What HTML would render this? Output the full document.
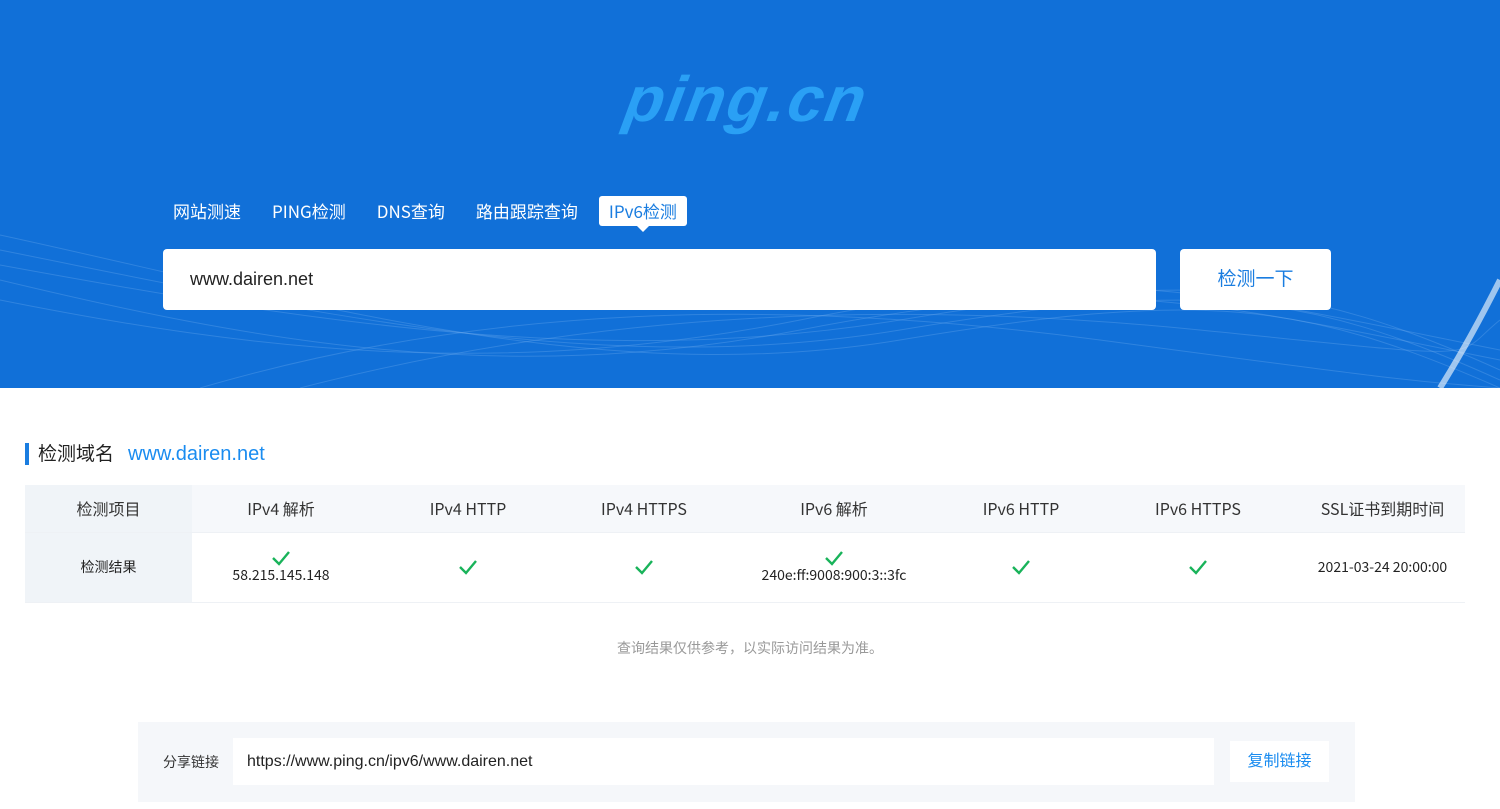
<!DOCTYPE html>
<html><head><meta charset="utf-8"><style>
*{margin:0;padding:0;box-sizing:border-box}
body{width:1500px;height:809px;overflow:hidden;background:#fff;font-family:"Liberation Sans","Noto Sans CJK SC",sans-serif;color:#333}
.hd{position:absolute;left:0;top:0;width:1500px;height:388px;background:#1170d8;overflow:hidden}
.logo{position:absolute;left:626px;top:62px;font:italic bold 64px "Liberation Sans",sans-serif;color:#2aa0f5;letter-spacing:2px;transform:skewX(-10deg)}
.tabs{position:absolute;top:196px;left:163px;display:flex;font-size:17px;color:#fff}
.tabs span{padding:4px 10px;margin-right:11px;height:30px;line-height:22px;font-family:"Noto Sans CJK SC","Liberation Sans",sans-serif}
.tabs .on{background:#fff;color:#1a7de0;border-radius:3px;position:relative}
.tabs .on:after{content:"";position:absolute;left:38px;bottom:-6px;border:6px solid transparent;border-bottom:0;border-top-color:#fff}
.inp{position:absolute;left:163px;top:249px;width:993px;height:61px;background:#fff;border-radius:4px;font-size:18px;line-height:61px;padding-left:27px;color:#222}
.btn{position:absolute;left:1180px;top:249px;width:151px;height:61px;background:#fff;border-radius:4px;font-size:19px;line-height:61px;text-align:center;color:#1a7de0}
.tt{position:absolute;left:25px;top:443px;font-size:19px;color:#222;border-left:4px solid #1a7de0;padding-left:9px;height:22px;line-height:22px;white-space:nowrap}
.tt b{font-weight:normal;color:#1a8cf0;margin-left:14px;font-size:20px}
table{position:absolute;left:25px;top:485px;width:1440px;border-collapse:collapse;text-align:center}
td{border-bottom:1px solid #eef1f5;vertical-align:middle;font-family:"Noto Sans CJK SC","Liberation Sans",sans-serif}
tr.h td{height:47px;background:#f6f8fb;font-size:16px;color:#333;line-height:20px}
tr.r td{height:70px;font-size:14px;color:#222;line-height:18px}
td.f{background:#f0f4f8!important;width:167px}
.ck{display:block;margin:0 auto}
.note{position:absolute;top:638px;width:1500px;text-align:center;font-size:14px;color:#999;font-family:"Noto Sans CJK SC",sans-serif}
.sh{position:absolute;left:138px;top:722px;width:1217px;height:80px;background:#f5f7fa}
.sh .l{position:absolute;left:25px;top:30px;font-size:14px;color:#333}
.sh .i{position:absolute;left:95px;top:16px;width:981px;height:47px;background:#fff;font-size:16px;line-height:47px;padding-left:14px;color:#222}
.sh .c{position:absolute;left:1092px;top:19px;width:99px;height:41px;background:#fff;font-size:16px;line-height:41px;text-align:center;color:#1a8cf0}
</style></head><body>
<div class="hd">
<svg width="1500" height="388" style="position:absolute;left:0;top:0" fill="none" stroke="#6aa8ee" stroke-opacity=".35">
<path d="M0 235 C300 300 600 390 900 340 S1300 300 1500 388"/>
<path d="M0 250 C300 310 600 380 900 330 S1300 290 1500 380"/>
<path d="M0 265 C300 320 600 370 900 320 S1300 280 1500 370"/>
<path d="M0 280 C250 340 500 388 800 330 S1200 300 1500 360"/>
<path d="M0 300 C250 350 500 380 800 320 S1200 290 1500 350"/>
<path d="M200 388 C500 300 800 300 1100 340 S1400 380 1500 388"/>
<path d="M300 388 C600 310 900 300 1200 330 S1450 360 1500 320"/>
<path d="M1440 388 C1470 340 1490 300 1500 280" stroke="#fff" stroke-opacity=".6" stroke-width="6"/>
</svg>
<div class="logo">ping.cn</div>
<div class="tabs"><span>网站测速</span><span>PING检测</span><span>DNS查询</span><span>路由跟踪查询</span><span class="on">IPv6检测</span></div>
<div class="inp">www.dairen.net</div>
<div class="btn">检测一下</div>
</div>
<div class="tt">检测域名<b>www.dairen.net</b></div>
<table>
<tr class="h"><td class="f">检测项目</td><td style="width:178px">IPv4 解析</td><td style="width:196px">IPv4 HTTP</td><td style="width:156px">IPv4 HTTPS</td><td style="width:224px">IPv6 解析</td><td style="width:150px">IPv6 HTTP</td><td style="width:204px">IPv6 HTTPS</td><td>SSL证书到期时间</td></tr>
<tr class="r"><td class="f">检测结果</td>
<td><svg class="ck" width="20" height="16"><path d="M2 8 L8 14 L18 2" stroke="#19b35a" stroke-width="2.4" fill="none"/></svg>58.215.145.148</td>
<td><svg class="ck" width="20" height="16"><path d="M2 8 L8 14 L18 2" stroke="#19b35a" stroke-width="2.4" fill="none"/></svg></td>
<td><svg class="ck" width="20" height="16"><path d="M2 8 L8 14 L18 2" stroke="#19b35a" stroke-width="2.4" fill="none"/></svg></td>
<td><svg class="ck" width="20" height="16"><path d="M2 8 L8 14 L18 2" stroke="#19b35a" stroke-width="2.4" fill="none"/></svg>240e:ff:9008:900:3::3fc</td>
<td><svg class="ck" width="20" height="16"><path d="M2 8 L8 14 L18 2" stroke="#19b35a" stroke-width="2.4" fill="none"/></svg></td>
<td><svg class="ck" width="20" height="16"><path d="M2 8 L8 14 L18 2" stroke="#19b35a" stroke-width="2.4" fill="none"/></svg></td>
<td>2021-03-24 20:00:00</td></tr>
</table>
<div class="note">查询结果仅供参考，以实际访问结果为准。</div>
<div class="sh"><div class="l">分享链接</div><div class="i">https://www.ping.cn/ipv6/www.dairen.net</div><div class="c">复制链接</div></div>
</body></html>
